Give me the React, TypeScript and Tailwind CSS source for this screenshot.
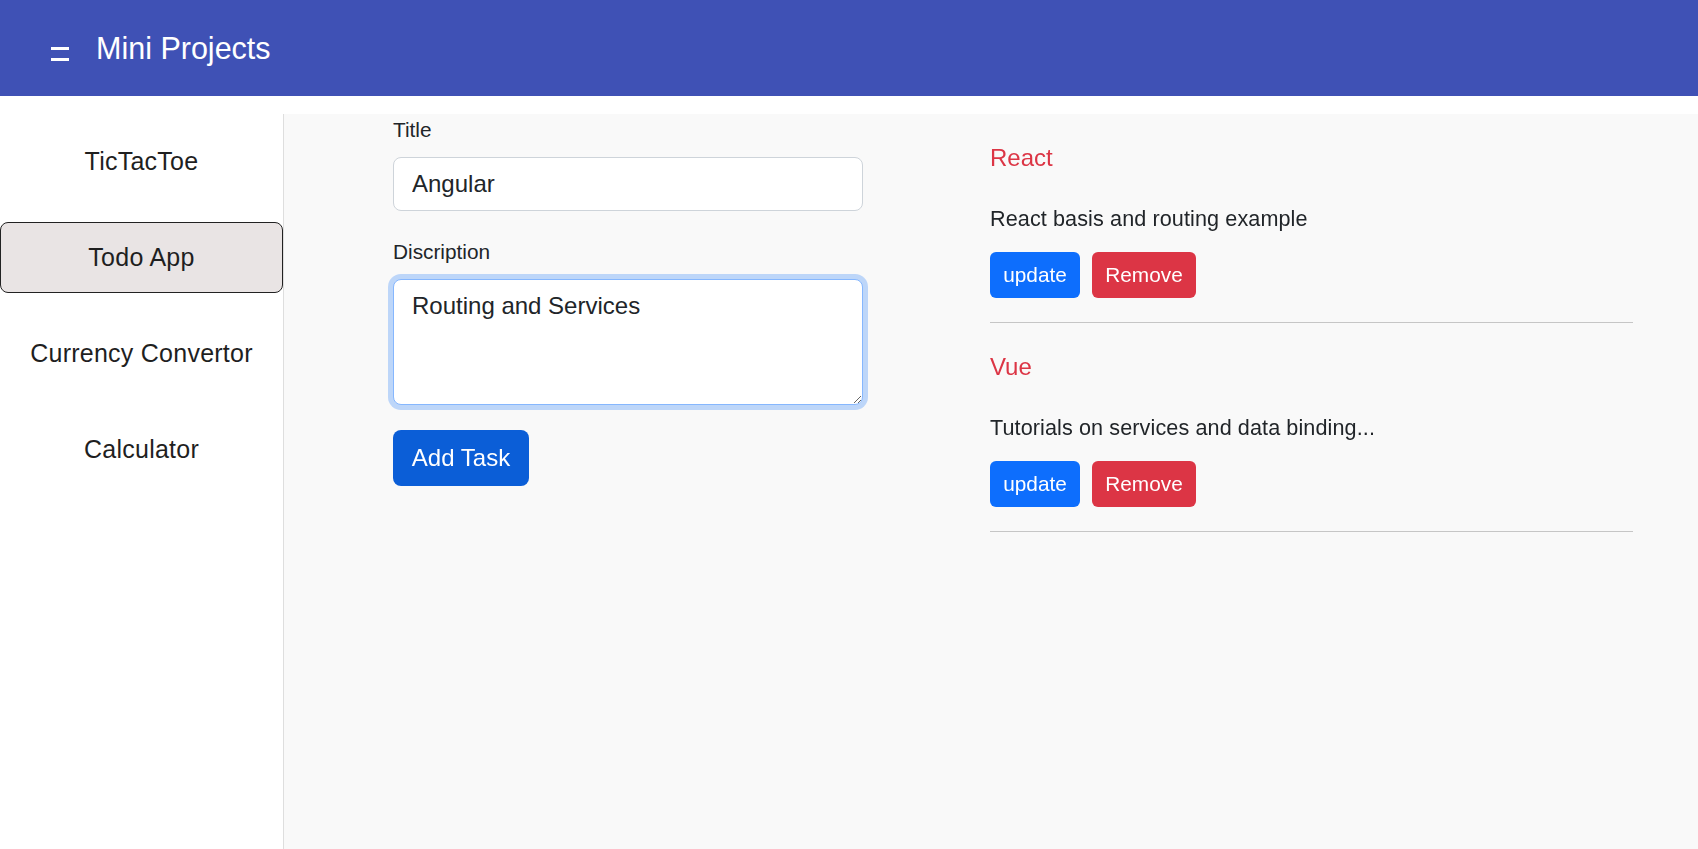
import React, { useEffect, useRef } from 'react';

interface Task {
  id: number;
  title: string;
  description: string;
}

const navItems = ['TicTacToe', 'Todo App', 'Currency Convertor', 'Calculator'];

const tasks: Task[] = [
  { id: 1, title: 'React', description: 'React basis and routing example' },
  { id: 2, title: 'Vue', description: 'Tutorials on services and data binding...' },
];

const App: React.FC = () => {
  const descRef = useRef<HTMLTextAreaElement>(null);

  // keep the caret at the end of the description, like the user just typed it
  useEffect(() => {
    const el = descRef.current;
    if (el) {
      el.focus();
      el.setSelectionRange(el.value.length, el.value.length);
    }
  }, []);

  return (
    <div className="min-h-screen flex flex-col bg-white font-['Liberation_Sans',Arial,sans-serif] text-[#212529]">
      <header className="h-[96px] bg-[#3f51b5] flex items-center shrink-0">
        <div className="ml-[51px] mt-[11px] w-[18px] flex flex-col gap-[8px]">
          <span className="block h-[3px] bg-white" />
          <span className="block h-[3px] bg-white" />
        </div>
        <h1 className="ml-[27px] text-[30.5px] text-white leading-none">Mini Projects</h1>
      </header>

      <div className="flex flex-1 mt-[18px]">
        <aside className="w-[284px] shrink-0 border-r border-[#dedede] pt-[12px] flex flex-col gap-[25px]">
          {navItems.map((item) => (
            <div
              key={item}
              className={`h-[71px] flex items-center justify-center text-[25px] tracking-[0.25px] text-[#1f1f1f] rounded-[8px] border ${
                item === 'Todo App' ? 'bg-[#e9e4e4] border-[#222222]' : 'border-transparent'
              }`}
            >
              {item}
            </div>
          ))}
        </aside>

        <main className="flex-1 bg-[#f9f9f9] flex pl-[109px]">
          <div className="w-[470px] shrink-0">
            <label className="block text-[20.8px] leading-[31px]">Title</label>
            <input
              defaultValue="Angular"
              className="mt-[12px] w-full h-[54px] bg-white border border-[#ced4da] rounded-[8px] px-[18px] text-[24px] outline-none"
            />
            <label className="block mt-[25px] text-[20.8px] leading-[31px]">Discription</label>
            <textarea
              ref={descRef}
              defaultValue="Routing and Services"
              className="mt-[12px] block w-full h-[126px] bg-white border border-[#86b7fe] rounded-[8px] px-[18px] py-[8px] text-[24px] leading-[36px] outline-none shadow-[0_0_0_5px_rgba(13,110,253,0.25)]"
            />
            <button className="mt-[25px] w-[136px] h-[56px] rounded-[8px] bg-[#0b5ed7] text-white text-[24px]">
              Add Task
            </button>
          </div>

          <div className="ml-[127px] w-[643px]">
            {tasks.map((task) => (
              <div key={task.id} className="pt-[29px]">
                <h3 className="text-[24px] leading-[30px] text-[#dc3545]">{task.title}</h3>
                <p className="mt-[30px] text-[21.6px] leading-[32px] tracking-[0.1px]">{task.description}</p>
                <div className="mt-[17px] flex gap-[12px]">
                  <button className="w-[90px] h-[46px] rounded-[6px] bg-[#0d6efd] text-white text-[20.8px]">
                    update
                  </button>
                  <button className="w-[104px] h-[46px] rounded-[6px] bg-[#dc3545] text-white text-[20.8px]">
                    Remove
                  </button>
                </div>
                <hr className="mt-[24px] border-0 border-t border-[#c6c6c6]" />
              </div>
            ))}
          </div>
        </main>
      </div>
    </div>
  );
};

export default App;
